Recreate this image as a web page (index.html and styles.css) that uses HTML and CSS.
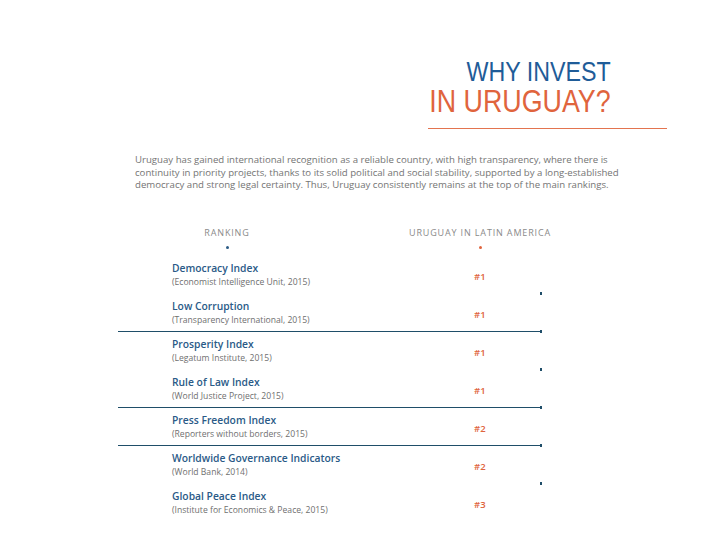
FILE: index.html
```html
<!DOCTYPE html>
<html>
<head>
<meta charset="utf-8">
<link rel="stylesheet" href="styles.css">
</head>
<body>
<div class="page">
  <header class="hero">
    <h1 class="title"><span class="t-blue">WHY INVEST</span><span class="t-orange">IN URUGUAY?</span></h1>
  </header>
  <p class="intro">Uruguay has gained international recognition as a reliable country, with high transparency, where there is continuity in priority projects, thanks to its solid political and social stability, supported by a long-established democracy and strong legal certainty. Thus, Uruguay consistently remains at the top of the main rankings.</p>
  <section class="table">
    <div class="thead">
      <div class="th th-left"><span>RANKING</span><i class="dot dot-blue"></i></div>
      <div class="th th-right"><span>URUGUAY IN LATIN AMERICA</span><i class="dot dot-orange"></i></div>
    </div>
    <div class="row sep-dot">
      <div class="name"><b>Democracy Index</b><small>(Economist Intelligence Unit, 2015)</small></div>
      <div class="rank">#1</div>
    </div>
    <div class="row sep-line">
      <div class="name"><b>Low Corruption</b><small>(Transparency International, 2015)</small></div>
      <div class="rank">#1</div>
    </div>
    <div class="row sep-dot">
      <div class="name"><b>Prosperity Index</b><small>(Legatum Institute, 2015)</small></div>
      <div class="rank">#1</div>
    </div>
    <div class="row sep-line">
      <div class="name"><b>Rule of Law Index</b><small>(World Justice Project, 2015)</small></div>
      <div class="rank">#1</div>
    </div>
    <div class="row sep-line">
      <div class="name"><b>Press Freedom Index</b><small>(Reporters without borders, 2015)</small></div>
      <div class="rank">#2</div>
    </div>
    <div class="row sep-dot">
      <div class="name"><b>Worldwide Governance Indicators</b><small>(World Bank, 2014)</small></div>
      <div class="rank">#2</div>
    </div>
    <div class="row">
      <div class="name"><b>Global Peace Index</b><small>(Institute for Economics &amp; Peace, 2015)</small></div>
      <div class="rank">#3</div>
    </div>
  </section>
</div>
</body>
</html>
```

FILE: styles.css
```css
html, body {
  margin: 0;
  padding: 0;
  background: #ffffff;
}
.page {
  width: 720px;
  height: 540px;
  overflow: hidden;
  padding-top: 57px;
  box-sizing: border-box;
  font-family: "Open Sans", "Liberation Sans", sans-serif;
}
.hero {
  margin-left: 428px;
  width: 239px;
  border-bottom: 1px solid #e3744f;
  padding-bottom: 10px;
}
.title {
  margin: 0;
  padding-right: 56px;
  display: flex;
  flex-direction: column;
  align-items: flex-end;
  font-family: "Liberation Sans", Arial, sans-serif;
  font-weight: normal;
  white-space: nowrap;
}
.title span {
  display: block;
  width: max-content;
  transform-origin: right center;
}
.t-blue {
  color: #1f5c98;
  font-size: 28px;
  line-height: 29px;
  transform: scaleX(0.83);
}
.t-orange {
  color: #e0643d;
  font-size: 31px;
  line-height: 32px;
  transform: scaleX(0.865);
}
.intro {
  margin: 25px 0 0 135px;
  width: 490px;
  font-size: 9.65px;
  line-height: 12.5px;
  color: #747474;
}
.table {
  margin: 34px 0 0 118px;
  width: 424px;
}
.thead {
  display: flex;
  height: 30px;
}
.th {
  display: flex;
  flex-direction: column;
  align-items: center;
  gap: 7px;
  font-size: 9px;
  color: #8a8a8a;
  letter-spacing: 0.85px;
  white-space: nowrap;
  flex: none;
}
.th-left { width: 218px; }
.th-right { margin-left: 69px; width: 150px; }
.dot {
  display: block;
  width: 3px;
  height: 3px;
  border-radius: 50%;
}
.dot-blue { background: #2b5b85; }
.dot-orange { background: #e0643d; }
.row {
  position: relative;
  display: flex;
  align-items: center;
  padding: 5px 0 4px 54px;
  height: 28px;
}
.row.sep-line { border-bottom: 1.5px solid #1f4e69; }
.row.sep-line::after,
.row.sep-dot::after {
  content: "";
  position: absolute;
  right: 0;
  bottom: -2px;
  width: 2px;
  height: 3px;
  background: #1f4e69;
}
.row.sep-dot { border-bottom: 1px solid transparent; }
.name {
  width: 302px;
  display: flex;
  flex-direction: column;
}
.name b {
  font-weight: 600;
  font-size: 10.3px;
  line-height: 15px;
  color: #2a5a87;
}
.name small {
  font-size: 8.6px;
  line-height: 13px;
  color: #6f6f6f;
}
.rank {
  font-size: 9.5px;
  color: #e0643d;
  font-weight: 600;
  padding-top: 4px;
}
```
